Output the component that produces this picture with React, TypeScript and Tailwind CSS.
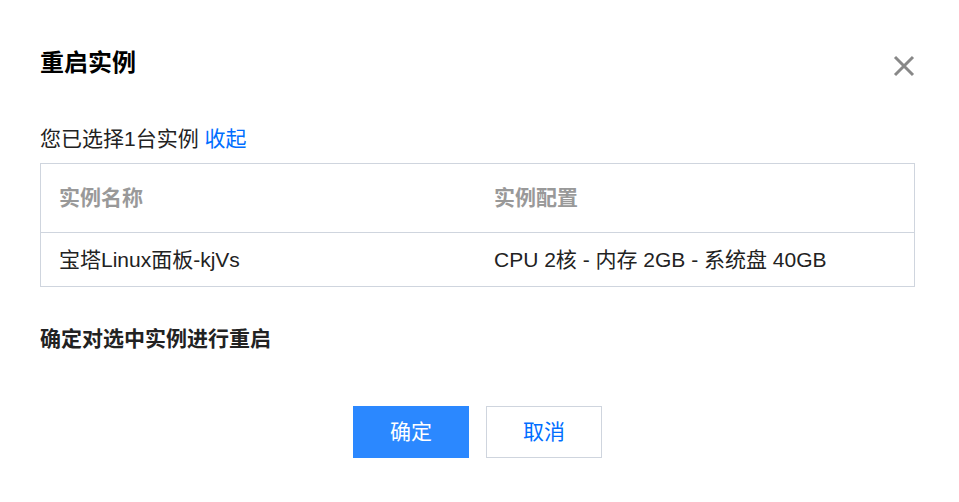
export default function App() {
  return (
    <div
      className="w-[959px] h-[502px] bg-white pl-10 pr-[44px] text-[#222]"
      style={{ fontFamily: '"Liberation Sans", "Noto Sans CJK SC", sans-serif' }}
    >
      <div className="flex items-center justify-between pt-[47px]">
        <h1 className="text-[24px] leading-[32px] font-bold text-black">重启实例</h1>
        <svg width="22" height="22" viewBox="0 0 22 22" className="mt-[6px]">
          <path d="M2 2L20 20M20 2L2 20" stroke="#888" strokeWidth="3" />
        </svg>
      </div>

      <p className="mt-[46px] text-[21px] leading-[28px]">
        您已选择1台实例 <span className="text-[#006eff]">收起</span>
      </p>

      <div className="mt-[10px] border border-[#cfd5de] text-[21px]">
        <div className="flex h-[68px] items-center font-bold text-[#999]">
          <div className="w-[435px] pl-[18px]">实例名称</div>
          <div className="flex-1 pl-[18px]">实例配置</div>
        </div>
        <div className="flex h-[54px] items-center border-t border-[#cfd5de]">
          <div className="w-[435px] pl-[18px]">宝塔Linux面板-kjVs</div>
          <div className="flex-1 pl-[18px]">CPU 2核 - 内存 2GB - 系统盘 40GB</div>
        </div>
      </div>

      <p className="mt-[38px] text-[21px] leading-[28px] font-bold">确定对选中实例进行重启</p>

      <div className="mt-[53px] flex justify-center gap-[17px]">
        <button className="w-[116px] h-[52px] bg-[#2b88ff] text-white text-[21px]">确定</button>
        <button className="w-[116px] h-[52px] border border-[#cfd5de] text-[#006eff] text-[21px]">取消</button>
      </div>
    </div>
  );
}
